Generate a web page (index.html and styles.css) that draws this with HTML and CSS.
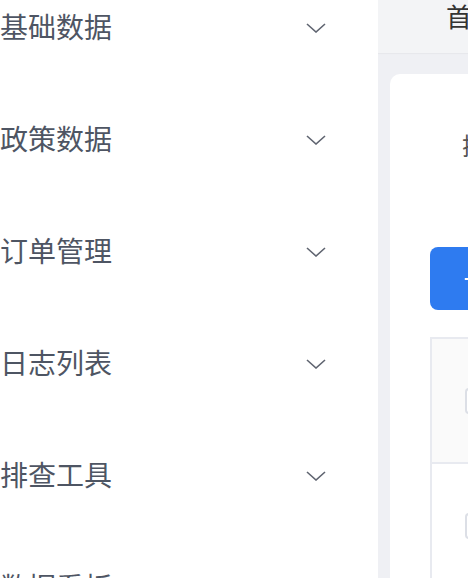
FILE: index.html
```html
<!DOCTYPE html>
<html lang="zh">
<head>
<meta charset="utf-8">
<link rel="stylesheet" href="styles.css">
</head>
<body>
<div class="layout">
  <aside class="sidebar">
    <ul class="menu">
      <li class="menu-item"><span>基础数据</span><svg class="chev" viewBox="0 0 20 10"><path d="M1 1 L10 9 L19 1"/></svg></li>
      <li class="menu-item"><span>政策数据</span><svg class="chev" viewBox="0 0 20 10"><path d="M1 1 L10 9 L19 1"/></svg></li>
      <li class="menu-item"><span>订单管理</span><svg class="chev" viewBox="0 0 20 10"><path d="M1 1 L10 9 L19 1"/></svg></li>
      <li class="menu-item"><span>日志列表</span><svg class="chev" viewBox="0 0 20 10"><path d="M1 1 L10 9 L19 1"/></svg></li>
      <li class="menu-item"><span>排查工具</span><svg class="chev" viewBox="0 0 20 10"><path d="M1 1 L10 9 L19 1"/></svg></li>
      <li class="menu-item"><span>数据看板</span><svg class="chev" viewBox="0 0 20 10"><path d="M1 1 L10 9 L19 1"/></svg></li>
    </ul>
  </aside>
  <main class="main">
    <div class="header"><span class="tab">首页</span></div>
    <div class="card">
      <div class="form-row"><span class="label">搜索条件</span></div>
      <div class="toolbar">
        <button class="btn-primary"><svg class="plus" viewBox="0 0 20 20"><path d="M1 10 H19 M10 1 V19"/></svg>新增</button>
      </div>
      <div class="table">
        <div class="tr thead"><span class="checkbox"></span></div>
        <div class="tr"><span class="checkbox"></span></div>
      </div>
    </div>
  </main>
</div>
</body>
</html>
```
FILE: styles.css
```css
html, body {
  margin: 0;
  padding: 0;
  width: 468px;
  height: 578px;
  overflow: hidden;
  font-family: "Noto Sans CJK SC", "Noto Sans", sans-serif;
}
.layout {
  display: flex;
  height: 578px;
}
.sidebar {
  width: 378px;
  flex-shrink: 0;
  background: #ffffff;
  overflow: hidden;
}
.menu {
  list-style: none;
  margin: -30px 0 0 0;
  padding: 0;
}
.menu-item {
  height: 112px;
  display: flex;
  align-items: center;
  justify-content: space-between;
  padding: 0 52px 0 0;
  font-size: 28px;
  color: #4e5563;
}
.chev {
  width: 20px;
  height: 10px;
  margin-top: 4px;
  fill: none;
  stroke: #5f6470;
  stroke-width: 1.6;
}
.main {
  flex: 1;
  background: #eff0f4;
  overflow: hidden;
  min-width: 0;
}
.header {
  height: 53px;
  background: #f3f4f6;
  box-shadow: 0 1px 1px rgba(0,0,0,0.03);
  padding-left: 68px;
  white-space: nowrap;
}
.tab {
  display: block;
  font-size: 26px;
  line-height: 31px;
  color: #333;
}
.card {
  margin: 21px 0 0 12px;
  background: #ffffff;
  border-radius: 10px 0 0 0;
  padding: 0 0 0 40px;
  height: 520px;
  white-space: nowrap;
}
.form-row {
  height: 140px;
  padding-left: 32px;
  display: flex;
  align-items: center;
}
.label {
  font-size: 24px;
  color: #555;
}
.toolbar {
  height: 123px;
  padding-top: 33px;
  box-sizing: border-box;
}
.btn-primary {
  display: flex;
  align-items: center;
  gap: 8px;
  height: 63px;
  width: 180px;
  border: none;
  border-radius: 8px 0 0 8px;
  background: #2e7bf0;
  color: #fff;
  font-size: 24px;
  padding: 0 0 0 34px;
  font-family: inherit;
}
.plus {
  width: 16px;
  height: 16px;
  stroke: #fff;
  stroke-width: 2.4;
  flex-shrink: 0;
}
.table {
  border: 2px solid #e8eaf0;
  border-right: none;
  border-bottom: none;
}
.tr {
  height: 123px;
  display: flex;
  align-items: center;
  padding-left: 33px;
  border-bottom: 2px solid #e8eaf0;
}
.thead {
  background: #fafafa;
}
.checkbox {
  width: 26px;
  height: 26px;
  border: 2px solid #dcdfe6;
  border-radius: 4px;
  background: #fff;
  box-sizing: border-box;
  flex-shrink: 0;
}
```
